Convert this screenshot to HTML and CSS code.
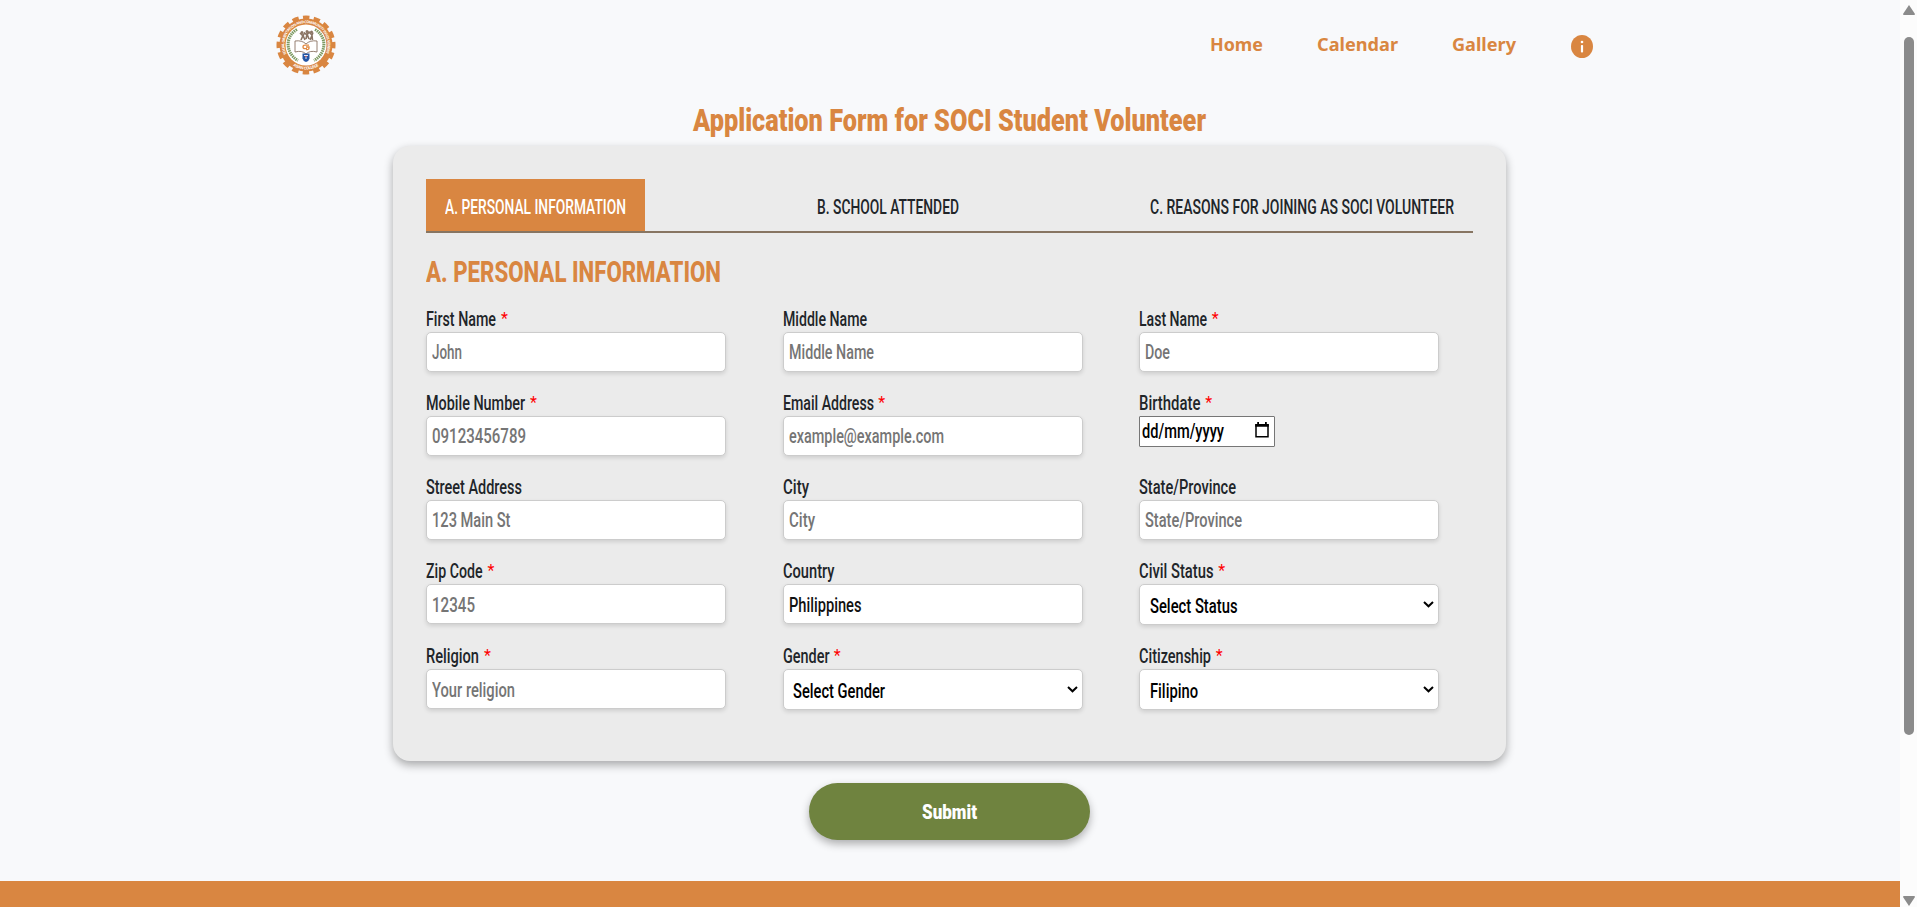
FILE: index.html
```
<!DOCTYPE html>
<html lang="en">
<head>
<meta charset="utf-8">
<title>Application Form</title>
<link rel="stylesheet" href="styles.css">
</head>
<body>
<div class="page">
  <header class="header">
    <svg class="logo" viewBox="0 0 60 60">
      <defs>
        <path id="arcTop" d="M10.5 39 A21.6 21.6 0 1 1 49.5 39"/>
        <path id="arcBottom" d="M11 45.5 A24.6 24.6 0 0 0 49 45.5"/>
      </defs>
      <circle cx="30" cy="30" r="27.3" fill="none" stroke="#d98641" stroke-width="4.4" stroke-dasharray="6.4 4.32" stroke-dashoffset="3.2"/>
      <circle cx="30" cy="30" r="26.500" fill="#d98641"/>
      <circle cx="30" cy="30" r="20.500" fill="#fff"/>
      <text class="logo-text"><textPath href="#arcTop" textLength="86">SOCIAL ORIENTATION AND COMMUNITY INVOLVEMENT</textPath></text>
      <text class="logo-text logo-text-lower"><textPath href="#arcBottom" startOffset="8" textLength="27">ASIAN COLLEGE</textPath></text>
      <g fill="none" stroke="#7d9a62" stroke-width="3" stroke-dasharray="1.5 .7">
        <path d="M21 14.500 C9 21 9 38 22 45.500"/>
        <path d="M39 14.500 C51 21 51 38 38 45.500"/>
      </g>
      <g fill="none" stroke="#8a7464" stroke-width="1.600">
        <path d="M25 25 L27 20.500 L29 25 M30 24 L31 19 L33 24 M34 25 L36 20.500 L36.500 25 M24 18 L27 21 L28.500 18 L31 20 L33 17 L36 20 L37 17.500"/>
        <circle cx="26" cy="17.500" r=".7"/><circle cx="31" cy="16.500" r=".7"/><circle cx="35.500" cy="17" r=".7"/>
      </g>
      <path d="M30 29 Q26 25 19 26 V37 Q26 35 30 39 Q34 35 41 37 V26 Q34 25 30 29 Z" fill="#fff" stroke="#8a7262" stroke-width=".9"/>
      <path d="M33 30.200 H29 Q27 30.200 27 32 Q27 33.700 29 33.700 H31 M30 32 H33 V33.200 Q33 34.700 30 34.700" fill="none" stroke="#e28a42" stroke-width="1.300"/>
      <path d="M26.500 38.500 H33.500 V43.500 Q33 46 30 47 Q27 46 26.500 43.500 Z" fill="#2455a4"/>
      <path d="M28 40.500 H32 M30 40.500 V44" stroke="#dfe8f7" stroke-width="1"/>
      <path d="M29.300 41.500 H30.700" stroke="#d03c3c" stroke-width="1"/>
    </svg>
    <nav class="nav">
      <a class="nav-link"><span class="fit" data-w="53">Home</span></a>
      <a class="nav-link"><span class="fit" data-w="81">Calendar</span></a>
      <a class="nav-link"><span class="fit" data-w="64">Gallery</span></a>
      <svg class="info" viewBox="0 0 22 23"><ellipse cx="11" cy="11.500" rx="11" ry="11.500" fill="#d98641"/><circle cx="11" cy="7" r="1.300" fill="#fff"/><rect x="9.900" y="10" width="2.200" height="7.500" rx=".8" fill="#fff"/></svg>
    </nav>
  </header>
  <h1 class="title"><span class="fit" data-w="513">Application Form for SOCI Student Volunteer</span></h1>
  <main class="card">
    <div class="tabs">
      <div class="tab tab-active"><span class="fit" data-w="181">A. PERSONAL INFORMATION</span></div>
      <div class="tab"><span class="fit" data-w="142">B. SCHOOL ATTENDED</span></div>
      <div class="tab"><span class="fit" data-w="304">C. REASONS FOR JOINING AS SOCI VOLUNTEER</span></div>
    </div>
    <h2 class="section-title"><span class="fit" data-w="295">A. PERSONAL INFORMATION</span></h2>
    <div class="grid">
      <div class="cell"><div class="label"><span class="fit" data-w="70">First Name</span><b class="star">*</b></div><div class="input hint"><span class="fit" data-w="30">John</span></div></div>
      <div class="cell"><div class="label"><span class="fit" data-w="84">Middle Name</span></div><div class="input hint"><span class="fit" data-w="85">Middle Name</span></div></div>
      <div class="cell"><div class="label"><span class="fit" data-w="68">Last Name</span><b class="star">*</b></div><div class="input hint"><span class="fit" data-w="25">Doe</span></div></div>

      <div class="cell"><div class="label"><span class="fit" data-w="99">Mobile Number</span><b class="star">*</b></div><div class="input hint"><span class="fit" data-w="94">09123456789</span></div></div>
      <div class="cell"><div class="label"><span class="fit" data-w="91">Email Address</span><b class="star">*</b></div><div class="input hint"><span class="fit" data-w="155">example@example.com</span></div></div>
      <div class="cell"><div class="label"><span class="fit" data-w="61.500">Birthdate</span><b class="star">*</b></div>
        <div class="date"><span class="fit" data-w="82">dd/mm/yyyy</span><svg class="calendar" viewBox="0 0 14 16"><path d="M1 3 H13 V14.800 H1 Z" fill="none" stroke="#000" stroke-width="1.500"/><path d="M.2 2 H13.800 V4.800 H.2 Z M2.200 0 H4 V3 H2.200 Z M10 0 H11.800 V3 H10 Z"/></svg></div></div>

      <div class="cell"><div class="label"><span class="fit" data-w="96">Street Address</span></div><div class="input hint"><span class="fit" data-w="78.500">123 Main St</span></div></div>
      <div class="cell"><div class="label"><span class="fit" data-w="26">City</span></div><div class="input hint"><span class="fit" data-w="26">City</span></div></div>
      <div class="cell"><div class="label"><span class="fit" data-w="97">State/Province</span></div><div class="input hint"><span class="fit" data-w="97">State/Province</span></div></div>

      <div class="cell"><div class="label"><span class="fit" data-w="56.500">Zip Code</span><b class="star">*</b></div><div class="input hint low"><span class="fit" data-w="43">12345</span></div></div>
      <div class="cell"><div class="label"><span class="fit" data-w="51.500">Country</span></div><div class="input low"><span class="fit" data-w="72.500">Philippines</span></div></div>
      <div class="cell"><div class="label"><span class="fit" data-w="74.500">Civil Status</span><b class="star">*</b></div><div class="input select"><span class="fit" data-w="87.500">Select Status</span><svg class="chevron" viewBox="0 0 11 7"><path d="M1 1 L5.500 5.300 L10 1" fill="none" stroke="#000" stroke-width="2"/></svg></div></div>

      <div class="cell"><div class="label"><span class="fit" data-w="53">Religion</span><b class="star">*</b></div><div class="input hint low"><span class="fit" data-w="83">Your religion</span></div></div>
      <div class="cell"><div class="label"><span class="fit" data-w="46.500">Gender</span><b class="star">*</b></div><div class="input select"><span class="fit" data-w="92">Select Gender</span><svg class="chevron" viewBox="0 0 11 7"><path d="M1 1 L5.500 5.300 L10 1" fill="none" stroke="#000" stroke-width="2"/></svg></div></div>
      <div class="cell"><div class="label"><span class="fit" data-w="72">Citizenship</span><b class="star">*</b></div><div class="input select"><span class="fit" data-w="48">Filipino</span><svg class="chevron" viewBox="0 0 11 7"><path d="M1 1 L5.500 5.300 L10 1" fill="none" stroke="#000" stroke-width="2"/></svg></div></div>
    </div>
  </main>
  <button class="submit"><span class="fit" data-w="55">Submit</span></button>
  <footer class="footer"></footer>
</div>
<div class="scrollbar">
  <svg class="arrow" viewBox="0 0 12 10"><path d="M6 0 L12 9 Q12 10 11 10 H1 Q0 10 0 9 Z" fill="#8b8b8b"/></svg>
  <div class="thumb"></div>
  <svg class="arrow arrow-down" viewBox="0 0 12 10"><path d="M6 10 L12 1 Q12 0 11 0 H1 Q0 0 0 1 Z" fill="#8b8b8b"/></svg>
</div>
<script src="fit.js"></script>
</body>
</html>
```
FILE: styles.css
```
* { box-sizing: border-box; }
html, body { margin: 0; height: 907px; overflow: hidden; }
body {
  display: flex;
  background: #f8f9fb;
  color: #212529;
  font-family: Roboto, "Liberation Sans", sans-serif;
  font-size: 20px;
  font-weight: 460;
}
.page { width: 1900px; height: 907px; display: flex; flex-direction: column; align-items: center; }
.fit { display: inline-block; white-space: nowrap; transform-origin: 0 50%; }

.header { width: 1900px; height: 90px; padding: 15px 307px 0 275.500px; display: flex; justify-content: space-between; }
.logo { width: 60px; height: 60px; }
.logo-text { font: bold 3.7px "Open Sans", sans-serif; fill: #fff; }
.logo-text-lower { font-size: 4px; }
.nav { display: flex; align-items: flex-start; gap: 54px; }
.nav-link {
  color: #d98641;
  font-family: "Noto Sans", sans-serif;
  font-weight: 700;
  font-size: 17.6px;
  line-height: 24px;
  padding-top: 17px;
}
.info { width: 22px; height: 23px; margin: 20px 0 0 1px; }

.title { margin: 0 1px 0 0; height: 55px; padding-top: 11px; font-size: 31px; line-height: 40px; font-weight: 900; color: #d98641; }
.card {
  width: 1113px;
  height: 615px;
  margin: 1px 1px 0 0;
  padding: 33px 33px 0;
  border-radius: 17px;
  background: #ebebeb;
  box-shadow: 0 4px 10px rgba(0, 0, 0, .33);
}
.tabs { display: flex; justify-content: space-between; height: 54px; border-bottom: 2px solid #877562; }
.tab { padding: 15px 19px 0; line-height: 27px; font-size: 20.500px; }
.tab-active { background: #d98641; color: #fff; }
.section-title { margin: 19px 0 0; height: 54px; line-height: 40px; font-size: 30px; font-weight: 800; color: #d98641; }
.grid { display: grid; margin-left: .4px; grid-template-columns: repeat(3, 356.400px); grid-template-rows: 84px 84px 84px 85px 85px; }
.cell { width: 300px; }
.label { height: 26px; line-height: 26px; display: flex; gap: 4.500px; }
.star { color: #f00; font-weight: 400; font-size: 16px; line-height: 25px; }
.input {
  height: 40px;
  padding: 0 5px;
  line-height: 38px;
  background: #fff;
  color: #111;
  border: 1px solid #ccc;
  border-radius: 5px;
  box-shadow: 0 2px 4px rgba(0, 0, 0, .12);
}
.hint { color: #757575; }
.low { line-height: 40px; }
.select { height: 41px; display: flex; justify-content: space-between; padding: 2px 4px 0 9.500px; line-height: 38px; color: #000; }
.chevron { width: 11px; height: 7px; margin-top: 14px; }
.date {
  width: 136px;
  height: 31px;
  padding: 0 5px 0 2px;
  display: flex;
  justify-content: space-between;
  line-height: 29px;
  background: #fff;
  color: #000;
  border: 1px solid #767676;
  border-radius: 1px;
}
.calendar { width: 14px; height: 16px; margin-top: 5px; }

.submit {
  width: 281px;
  height: 57px;
  margin: 22px 1px 0 0;
  padding: 0;
  border: 0;
  border-radius: 29px;
  background: #6f833f;
  color: #fff;
  font: 900 21px Roboto, sans-serif;
  box-shadow: 0 4px 8px rgba(0, 0, 0, .3);
}
.footer { width: 1900px; height: 26px; margin-top: auto; background: #d98641; }

.scrollbar { width: 17px; height: 907px; padding: 5px 0 1px; display: flex; flex-direction: column; align-items: center; background: #fcfcfc; }
.arrow { width: 12px; height: 10px; }
.thumb { width: 10px; height: 698px; margin-top: 22px; border-radius: 5px; background: #8b8b8b; }
.arrow-down { margin-top: auto; }
```
FILE: fit.js
```
// Condenses each line of text to the width given in data-w.
document.querySelectorAll('.fit').forEach(function (el) {
  var natural = el.getBoundingClientRect().width;
  var wanted = parseFloat(el.dataset.w);
  el.style.transform = 'scaleX(' + wanted / natural + ')';
  el.style.marginRight = (wanted - natural) + 'px';
});
```
